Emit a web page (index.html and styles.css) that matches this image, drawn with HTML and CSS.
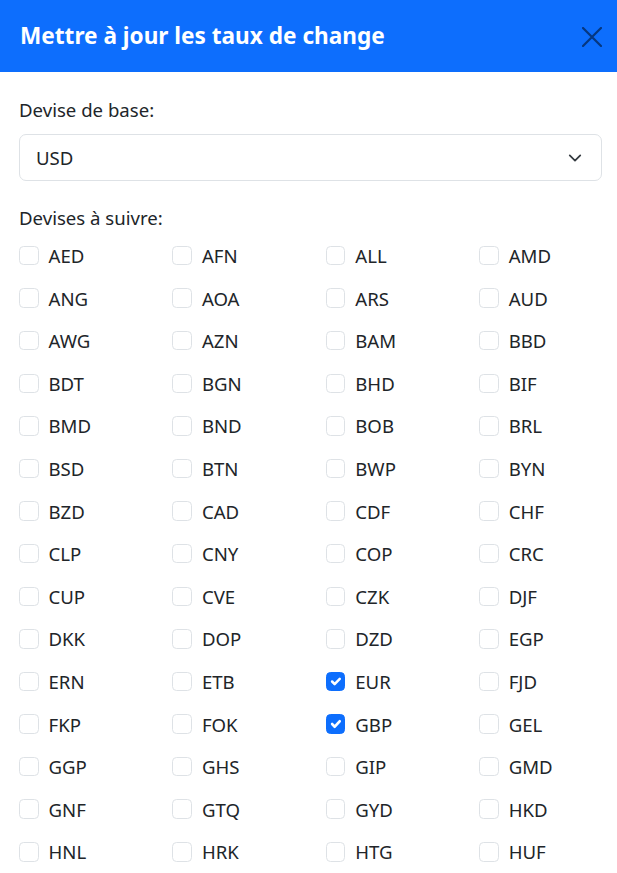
FILE: index.html
```html
<!DOCTYPE html>
<html lang="fr">
<head>
<meta charset="utf-8">
<title>Mettre à jour les taux de change</title>
<link rel="stylesheet" href="styles.css">
</head>
<body>
<div class="modal">
  <header class="modal-header">
    <h1 class="modal-title">Mettre à jour les taux de change</h1>
    <button class="btn-close" aria-label="Fermer">
      <svg viewBox="0 0 20 20" width="20" height="20"><path d="M1 1L19 19M19 1L1 19" stroke="currentColor" stroke-width="2.2" stroke-linecap="round" fill="none"/></svg>
    </button>
  </header>
  <div class="modal-body">
    <label class="form-label">Devise de base:</label>
    <div class="form-select">
      <span>USD</span>
      <svg class="chev" viewBox="0 0 16 16" width="16" height="16"><path d="M2 5l6 6 6-6" stroke="#343a40" stroke-width="2" fill="none" stroke-linecap="round" stroke-linejoin="round"/></svg>
    </div>
    <label class="form-label second">Devises à suivre:</label>
    <div class="grid">
      <label class="check"><input type="checkbox"><span>AED</span></label>
      <label class="check"><input type="checkbox"><span>AFN</span></label>
      <label class="check"><input type="checkbox"><span>ALL</span></label>
      <label class="check"><input type="checkbox"><span>AMD</span></label>
      <label class="check"><input type="checkbox"><span>ANG</span></label>
      <label class="check"><input type="checkbox"><span>AOA</span></label>
      <label class="check"><input type="checkbox"><span>ARS</span></label>
      <label class="check"><input type="checkbox"><span>AUD</span></label>
      <label class="check"><input type="checkbox"><span>AWG</span></label>
      <label class="check"><input type="checkbox"><span>AZN</span></label>
      <label class="check"><input type="checkbox"><span>BAM</span></label>
      <label class="check"><input type="checkbox"><span>BBD</span></label>
      <label class="check"><input type="checkbox"><span>BDT</span></label>
      <label class="check"><input type="checkbox"><span>BGN</span></label>
      <label class="check"><input type="checkbox"><span>BHD</span></label>
      <label class="check"><input type="checkbox"><span>BIF</span></label>
      <label class="check"><input type="checkbox"><span>BMD</span></label>
      <label class="check"><input type="checkbox"><span>BND</span></label>
      <label class="check"><input type="checkbox"><span>BOB</span></label>
      <label class="check"><input type="checkbox"><span>BRL</span></label>
      <label class="check"><input type="checkbox"><span>BSD</span></label>
      <label class="check"><input type="checkbox"><span>BTN</span></label>
      <label class="check"><input type="checkbox"><span>BWP</span></label>
      <label class="check"><input type="checkbox"><span>BYN</span></label>
      <label class="check"><input type="checkbox"><span>BZD</span></label>
      <label class="check"><input type="checkbox"><span>CAD</span></label>
      <label class="check"><input type="checkbox"><span>CDF</span></label>
      <label class="check"><input type="checkbox"><span>CHF</span></label>
      <label class="check"><input type="checkbox"><span>CLP</span></label>
      <label class="check"><input type="checkbox"><span>CNY</span></label>
      <label class="check"><input type="checkbox"><span>COP</span></label>
      <label class="check"><input type="checkbox"><span>CRC</span></label>
      <label class="check"><input type="checkbox"><span>CUP</span></label>
      <label class="check"><input type="checkbox"><span>CVE</span></label>
      <label class="check"><input type="checkbox"><span>CZK</span></label>
      <label class="check"><input type="checkbox"><span>DJF</span></label>
      <label class="check"><input type="checkbox"><span>DKK</span></label>
      <label class="check"><input type="checkbox"><span>DOP</span></label>
      <label class="check"><input type="checkbox"><span>DZD</span></label>
      <label class="check"><input type="checkbox"><span>EGP</span></label>
      <label class="check"><input type="checkbox"><span>ERN</span></label>
      <label class="check"><input type="checkbox"><span>ETB</span></label>
      <label class="check"><input type="checkbox" checked><span>EUR</span></label>
      <label class="check"><input type="checkbox"><span>FJD</span></label>
      <label class="check"><input type="checkbox"><span>FKP</span></label>
      <label class="check"><input type="checkbox"><span>FOK</span></label>
      <label class="check"><input type="checkbox" checked><span>GBP</span></label>
      <label class="check"><input type="checkbox"><span>GEL</span></label>
      <label class="check"><input type="checkbox"><span>GGP</span></label>
      <label class="check"><input type="checkbox"><span>GHS</span></label>
      <label class="check"><input type="checkbox"><span>GIP</span></label>
      <label class="check"><input type="checkbox"><span>GMD</span></label>
      <label class="check"><input type="checkbox"><span>GNF</span></label>
      <label class="check"><input type="checkbox"><span>GTQ</span></label>
      <label class="check"><input type="checkbox"><span>GYD</span></label>
      <label class="check"><input type="checkbox"><span>HKD</span></label>
      <label class="check"><input type="checkbox"><span>HNL</span></label>
      <label class="check"><input type="checkbox"><span>HRK</span></label>
      <label class="check"><input type="checkbox"><span>HTG</span></label>
      <label class="check"><input type="checkbox"><span>HUF</span></label>
    </div>
  </div>
</div>
</body>
</html>
```

FILE: styles.css
```css
* { box-sizing: border-box; }
html, body {
  margin: 0;
  padding: 0;
  background: #fff;
}
body {
  font-family: "Noto Sans", "Open Sans", sans-serif;
  font-size: 18.6px;
  color: #212529;
  overflow: hidden;
}
.modal {
  width: 617px;
}
.modal-header {
  height: 72px;
  background: #0d6efd;
  display: flex;
  align-items: center;
  justify-content: space-between;
  padding: 0 15px 0 20px;
}
.modal-title {
  margin: 0;
  font-size: 22.6px;
  font-weight: 700;
  color: #fff;
  line-height: 1;
}
.btn-close {
  background: none;
  border: 0;
  padding: 0;
  width: 20px;
  height: 20px;
  color: #06377f;
  display: flex;
  margin-top: 1px;
}
.modal-body {
  padding: 23px 15px 0 19px;
}
.form-label {
  display: block;
  line-height: 29px;
  margin-bottom: 10px;
}
.form-label.second {
  margin-top: 22px;
  margin-bottom: 9px;
}
.form-select {
  height: 47px;
  border: 1px solid #dee2e6;
  border-radius: 7px;
  display: flex;
  align-items: center;
  justify-content: space-between;
  padding: 0 19px 0 16px;
  width: 583px;
}
.chev { width: 14px; height: 14px; }
.grid {
  display: grid;
  grid-template-columns: repeat(4, 153.4px);
  grid-auto-rows: 29px;
  row-gap: 13.6px;
}
.check {
  display: flex;
  align-items: center;
  gap: 10px;
  line-height: 29px;
}
.check input {
  appearance: none;
  -webkit-appearance: none;
  margin: 0;
  width: 19.5px;
  height: 19.5px;
  border: 1px solid #dee2e6;
  border-radius: 4.5px;
  background: #fff;
  flex: none;
}
.check input:checked {
  background-color: #0d6efd;
  border-color: #0d6efd;
  background-image: url("data:image/svg+xml,%3csvg xmlns='http://www.w3.org/2000/svg' viewBox='0 0 20 20'%3e%3cpath fill='none' stroke='%23fff' stroke-linecap='round' stroke-linejoin='round' stroke-width='3' d='M6 10l3 3l6-6'/%3e%3c/svg%3e");
  background-size: 100% 100%;
}
```
